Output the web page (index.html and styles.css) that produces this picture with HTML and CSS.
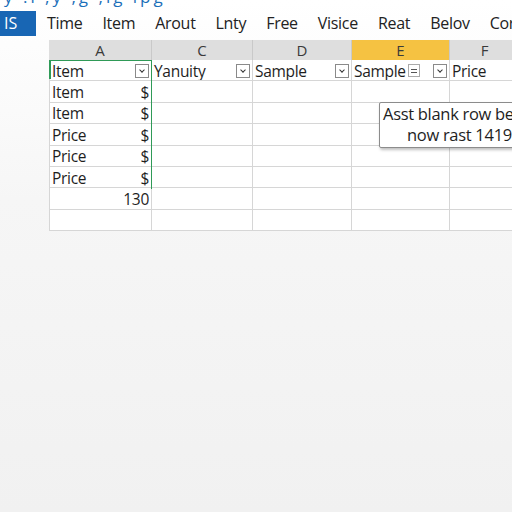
FILE: index.html
```html
<!DOCTYPE html>
<html>
<head>
<meta charset="utf-8">
<link rel="stylesheet" href="styles.css">
</head>
<body>
<div class="page">
  <div class="topline"><span>y .ı ,y ,g ,ıg ıpg</span></div>
  <div class="menubar">
    <div class="tab">IS</div>
    <div class="menu">
      <span>Time</span><span>Item</span><span>Arout</span><span>Lnty</span><span>Free</span><span>Visice</span><span>Reat</span><span>Belov</span><span>Corr</span>
    </div>
  </div>
  <div class="sheet-wrap">
    <div class="sheet">
      <div class="hd">A</div><div class="hd">C</div><div class="hd">D</div><div class="hd sel">E</div><div class="hd">F</div>

      <div class="c f first"><span>Item</span><i class="dd"></i></div>
      <div class="c f"><span>Yanuity</span><i class="dd"></i></div>
      <div class="c f"><span>Sample</span><i class="dd"></i></div>
      <div class="c f"><span>Sample</span><i class="ico"></i><i class="dd"></i></div>
      <div class="c f"><span>Price</span></div>

      <div class="c f"><span>Item</span><b>$</b></div><div class="c"></div><div class="c"></div><div class="c"></div><div class="c"></div>
      <div class="c f"><span>Item</span><b>$</b></div><div class="c"></div><div class="c"></div><div class="c"></div><div class="c"></div>
      <div class="c f"><span>Price</span><b>$</b></div><div class="c"></div><div class="c"></div><div class="c"></div><div class="c"></div>
      <div class="c f"><span>Price</span><b>$</b></div><div class="c"></div><div class="c"></div><div class="c"></div><div class="c"></div>
      <div class="c f"><span>Price</span><b>$</b></div><div class="c"></div><div class="c"></div><div class="c"></div><div class="c"></div>
      <div class="c f"><b>130</b></div><div class="c"></div><div class="c"></div><div class="c"></div><div class="c"></div>
      <div class="c"></div><div class="c"></div><div class="c"></div><div class="c"></div><div class="c"></div>

      <div class="selection"></div>
      <div class="tip">
        <div class="l1">Asst blank row be</div>
        <div class="l2">now rast 1419 |</div>
      </div>
    </div>
  </div>
</div>
</body>
</html>
```
FILE: styles.css
```css
html, body {
  margin: 0;
  padding: 0;
}
body {
  width: 512px;
  height: 512px;
  overflow: hidden;
  background: linear-gradient(#ffffff 0px, #f6f6f6 200px, #f1f1f1 512px);
  font-family: "Open Sans", "Noto Sans", sans-serif;
  color: #1e1e1e;
}
.page {
  height: 512px;
}
.topline {
  height: 7px;
  overflow: hidden;
  padding-left: 4px;
}
.topline span {
  display: block;
  margin-top: -13px;
  font-size: 17px;
  line-height: 20px;
  color: #1b6fb9;
  letter-spacing: 3px;
}
.menubar {
  display: flex;
  align-items: center;
  height: 28px;
  margin-top: 2px;
  overflow: hidden;
}
.tab {
  flex: none;
  width: 32px;
  height: 25px;
  background: #1866b4;
  color: #fff;
  font-size: 16px;
  line-height: 24px;
  padding-left: 4px;
}
.menu {
  flex: none;
  display: flex;
  gap: 20px;
  margin-left: 11px;
  font-size: 16px;
  line-height: 24px;
  letter-spacing: -0.3px;
  white-space: nowrap;
  color: #222;
}
.sheet-wrap {
  margin-top: 3px;
  padding-left: 49px;
}
.sheet {
  position: relative;
  display: grid;
  grid-template-columns: 103px 101px 99px 98px 70px;
  grid-template-rows: 20px repeat(8, 21.4px);
  background: #fff;
  width: 471px;
  overflow: visible;
}
.hd {
  background: #dedede;
  border-right: 1px solid #c9c9c9;
  text-align: center;
  font-size: 15px;
  line-height: 20px;
  color: #3a3a3a;
}
.hd.sel {
  background: #f5c242;
}
.c {
  border-right: 1px solid #d6d6d6;
  border-bottom: 1px solid #d6d6d6;
  display: flex;
  align-items: center;
  font-size: 15.5px;
  padding: 1px 2px 0 1px;
  white-space: nowrap;
  overflow: hidden;
  letter-spacing: -0.3px;
}
.sheet > .c:nth-child(5n+6) {
  border-left: 1px solid #d6d6d6;
}
.c span {
  flex: 1;
  margin-left: 1px;
}
.c b {
  font-weight: normal;
  margin-left: auto;
}
.dd {
  width: 12px;
  height: 12px;
  border: 1px solid #8a8a8a;
  background: #fff;
  position: relative;
  flex: none;
}
.dd::after {
  content: "";
  position: absolute;
  left: 4px;
  top: 3px;
  width: 3px;
  height: 3px;
  border-right: 1.3px solid #333;
  border-bottom: 1.3px solid #333;
  transform: rotate(45deg);
}
.ico {
  width: 10px;
  height: 11px;
  border: 1px solid #aaa;
  background: #fff;
  position: relative;
  margin-right: 13px;
  flex: none;
}
.ico::after {
  content: "";
  position: absolute;
  left: 2px;
  top: 4px;
  width: 6px;
  height: 2px;
  border-top: 1px solid #555;
  border-bottom: 1px solid #555;
}
.selection {
  position: absolute;
  left: 0;
  top: 20px;
  width: 102px;
  height: 128px;
  border-top: 1.5px solid #2f9a57;
  border-right: 1.5px solid #2f9a57;
  pointer-events: none;
}
.selection::before {
  content: "";
  position: absolute;
  left: 0;
  top: 0;
  width: 1.5px;
  height: 18px;
  background: #2f9a57;
}
.tip {
  position: absolute;
  left: 330px;
  top: 62px;
  width: 150px;
  height: 44px;
  background: #fff;
  border: 1px solid #8c8c8c;
  border-radius: 2px;
  box-shadow: 1px 2px 3px rgba(0,0,0,0.25);
  font-size: 16.5px;
  line-height: 21px;
  white-space: nowrap;
  overflow: hidden;
  letter-spacing: -0.3px;
}
.tip .l1 {
  padding-left: 3px;
}
.tip .l2 {
  padding-left: 27px;
}
```
